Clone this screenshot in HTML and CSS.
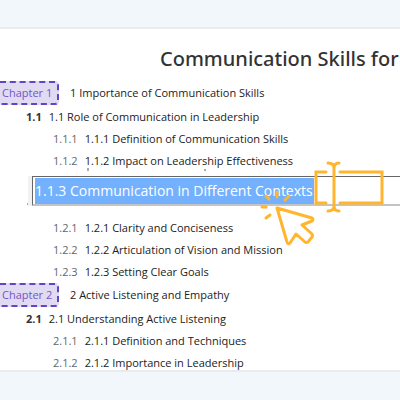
FILE: index.html
```html
<!DOCTYPE html>
<html lang="en">
  <head>
    <meta charset="UTF-8" />
    <meta name="viewport" content="width=device-width, initial-scale=1.0" />
    <title>Communication Skills for Leaders</title>
    <link rel="stylesheet" href="styles.css">
  </head>
  <body>
    <main class="panel">
      <h1>Communication Skills for</h1>
      <ol class="outline">
        <li class="chapter"><span class="badge">Chapter 1</span><span>1 Importance of Communication Skills</span></li>
        <li class="section"><b class="num">1.1</b><span>1.1 Role of Communication in Leadership</span></li>
        <li class="topic"><span class="num">1.1.1</span><span>1.1.1 Definition of Communication Skills</span></li>
        <li class="topic"><span class="num">1.1.2</span><span>1.1.2 Impact on Leadership Effectiveness</span></li>
        <li class="editing">
          <label class="field">
            <input type="text" aria-label="Topic title" spellcheck="false" value="1.1.3 Communication in Different Contexts" />
          </label>
          <!-- text cursor, pointer and click marks -->
          <svg class="pointer" viewBox="0 0 400 90" width="400" height="90" fill="none" stroke="#ffb52e" stroke-width="3" stroke-linecap="round" stroke-linejoin="round" aria-hidden="true">
            <path d="M88 0v3M205 1v2M27 36h1" stroke="#555" stroke-width="1" stroke-linecap="butt" />
            <path d="M326 4h-10v31h10M340 4h42v31h-42" stroke-linejoin="miter" />
            <path d="M328-5q6 0 6 5v38q0 5-6 5M339-5q-5 0-5 5M334 38q0 5 5 5" />
            <path d="M277 40l35 10q2 1 0 3l-10 4 10 9q1 2 0 3l-4 5q-2 1-3 0l-9-8-6 9q-2 2-3-1z" />
            <path d="M277 24v5M266 28l3 3M285 32l4-4M262 39h4M266 50l4-3" />
          </svg>
        </li>
        <li class="topic"><span class="num">1.2.1</span><span>1.2.1 Clarity and Conciseness</span></li>
        <li class="topic"><span class="num">1.2.2</span><span>1.2.2 Articulation of Vision and Mission</span></li>
        <li class="topic"><span class="num">1.2.3</span><span>1.2.3 Setting Clear Goals</span></li>
        <li class="chapter"><span class="badge">Chapter 2</span><span>2 Active Listening and Empathy</span></li>
        <li class="section"><b class="num">2.1</b><span>2.1 Understanding Active Listening</span></li>
        <li class="topic"><span class="num">2.1.1</span><span>2.1.1 Definition and Techniques</span></li>
        <li class="topic"><span class="num">2.1.2</span><span>2.1.2 Importance in Leadership</span></li>
      </ol>
    </main>
  </body>
</html>
```
FILE: styles.css
```css
* {
  box-sizing: border-box;
  margin: 0;
  padding: 0;
}
body {
  background: #f2f7fb;
  color: #222;
  font-family: "Open Sans", "Noto Sans", sans-serif;
  font-size: 11px;
  line-height: 22px;
  padding: 27px 0 28px;
  overflow: hidden;
}
.panel {
  background: #fff;
  border-top: 2px solid #e9ebed;
  border-bottom: 2px solid #e9ebed;
  overflow: hidden;
}
h1 {
  color: #333;
  font-family: "Noto Sans", "Open Sans", sans-serif;
  font-size: 20px;
  font-weight: 500;
  line-height: 28px;
  padding: 16px 0 8px 160px;
  white-space: nowrap;
}
.outline {
  list-style: none;
  margin-bottom: -4px;
}
.outline li {
  display: flex;
  align-items: center;
  white-space: nowrap;
}
.chapter {
  gap: 11px;
}
.badge {
  width: 59px;
  height: 24px;
  padding-left: 2px;
  line-height: 20px;
  color: #7257c6;
  background: #e0daf3;
  border: 2px dashed #6245c2;
  border-left: 0;
  border-radius: 0 4px 4px 0;
}
.section {
  gap: 7px;
  padding: 1px 0 0 26px;
}
.section .num {
  color: #333;
}
.topic {
  gap: 7px;
  padding-left: 53px;
}
.topic .num {
  color: #666;
}
.outline .editing {
  position: relative;
  padding: 4px 0 11px 32px;
}
.field {
  flex: 1;
  display: flex;
  min-width: 0;
  height: 30px;
  padding: 1px 2px 0;
  background: #fff;
  border: 1px solid #666;
  border-bottom: 2px solid #c4c4c4;
  border-right: 0;
  box-shadow: -4px 0 #f2f2f2;
}
.field input {
  width: 279px;
  field-sizing: content;
  font: inherit;
  font-size: 14px;
  color: #fff;
  background: #73b1ff;
  border: 0;
  outline: none;
}
.pointer {
  position: absolute;
  top: -4px;
  left: 0;
  overflow: visible;
  pointer-events: none;
}
```
